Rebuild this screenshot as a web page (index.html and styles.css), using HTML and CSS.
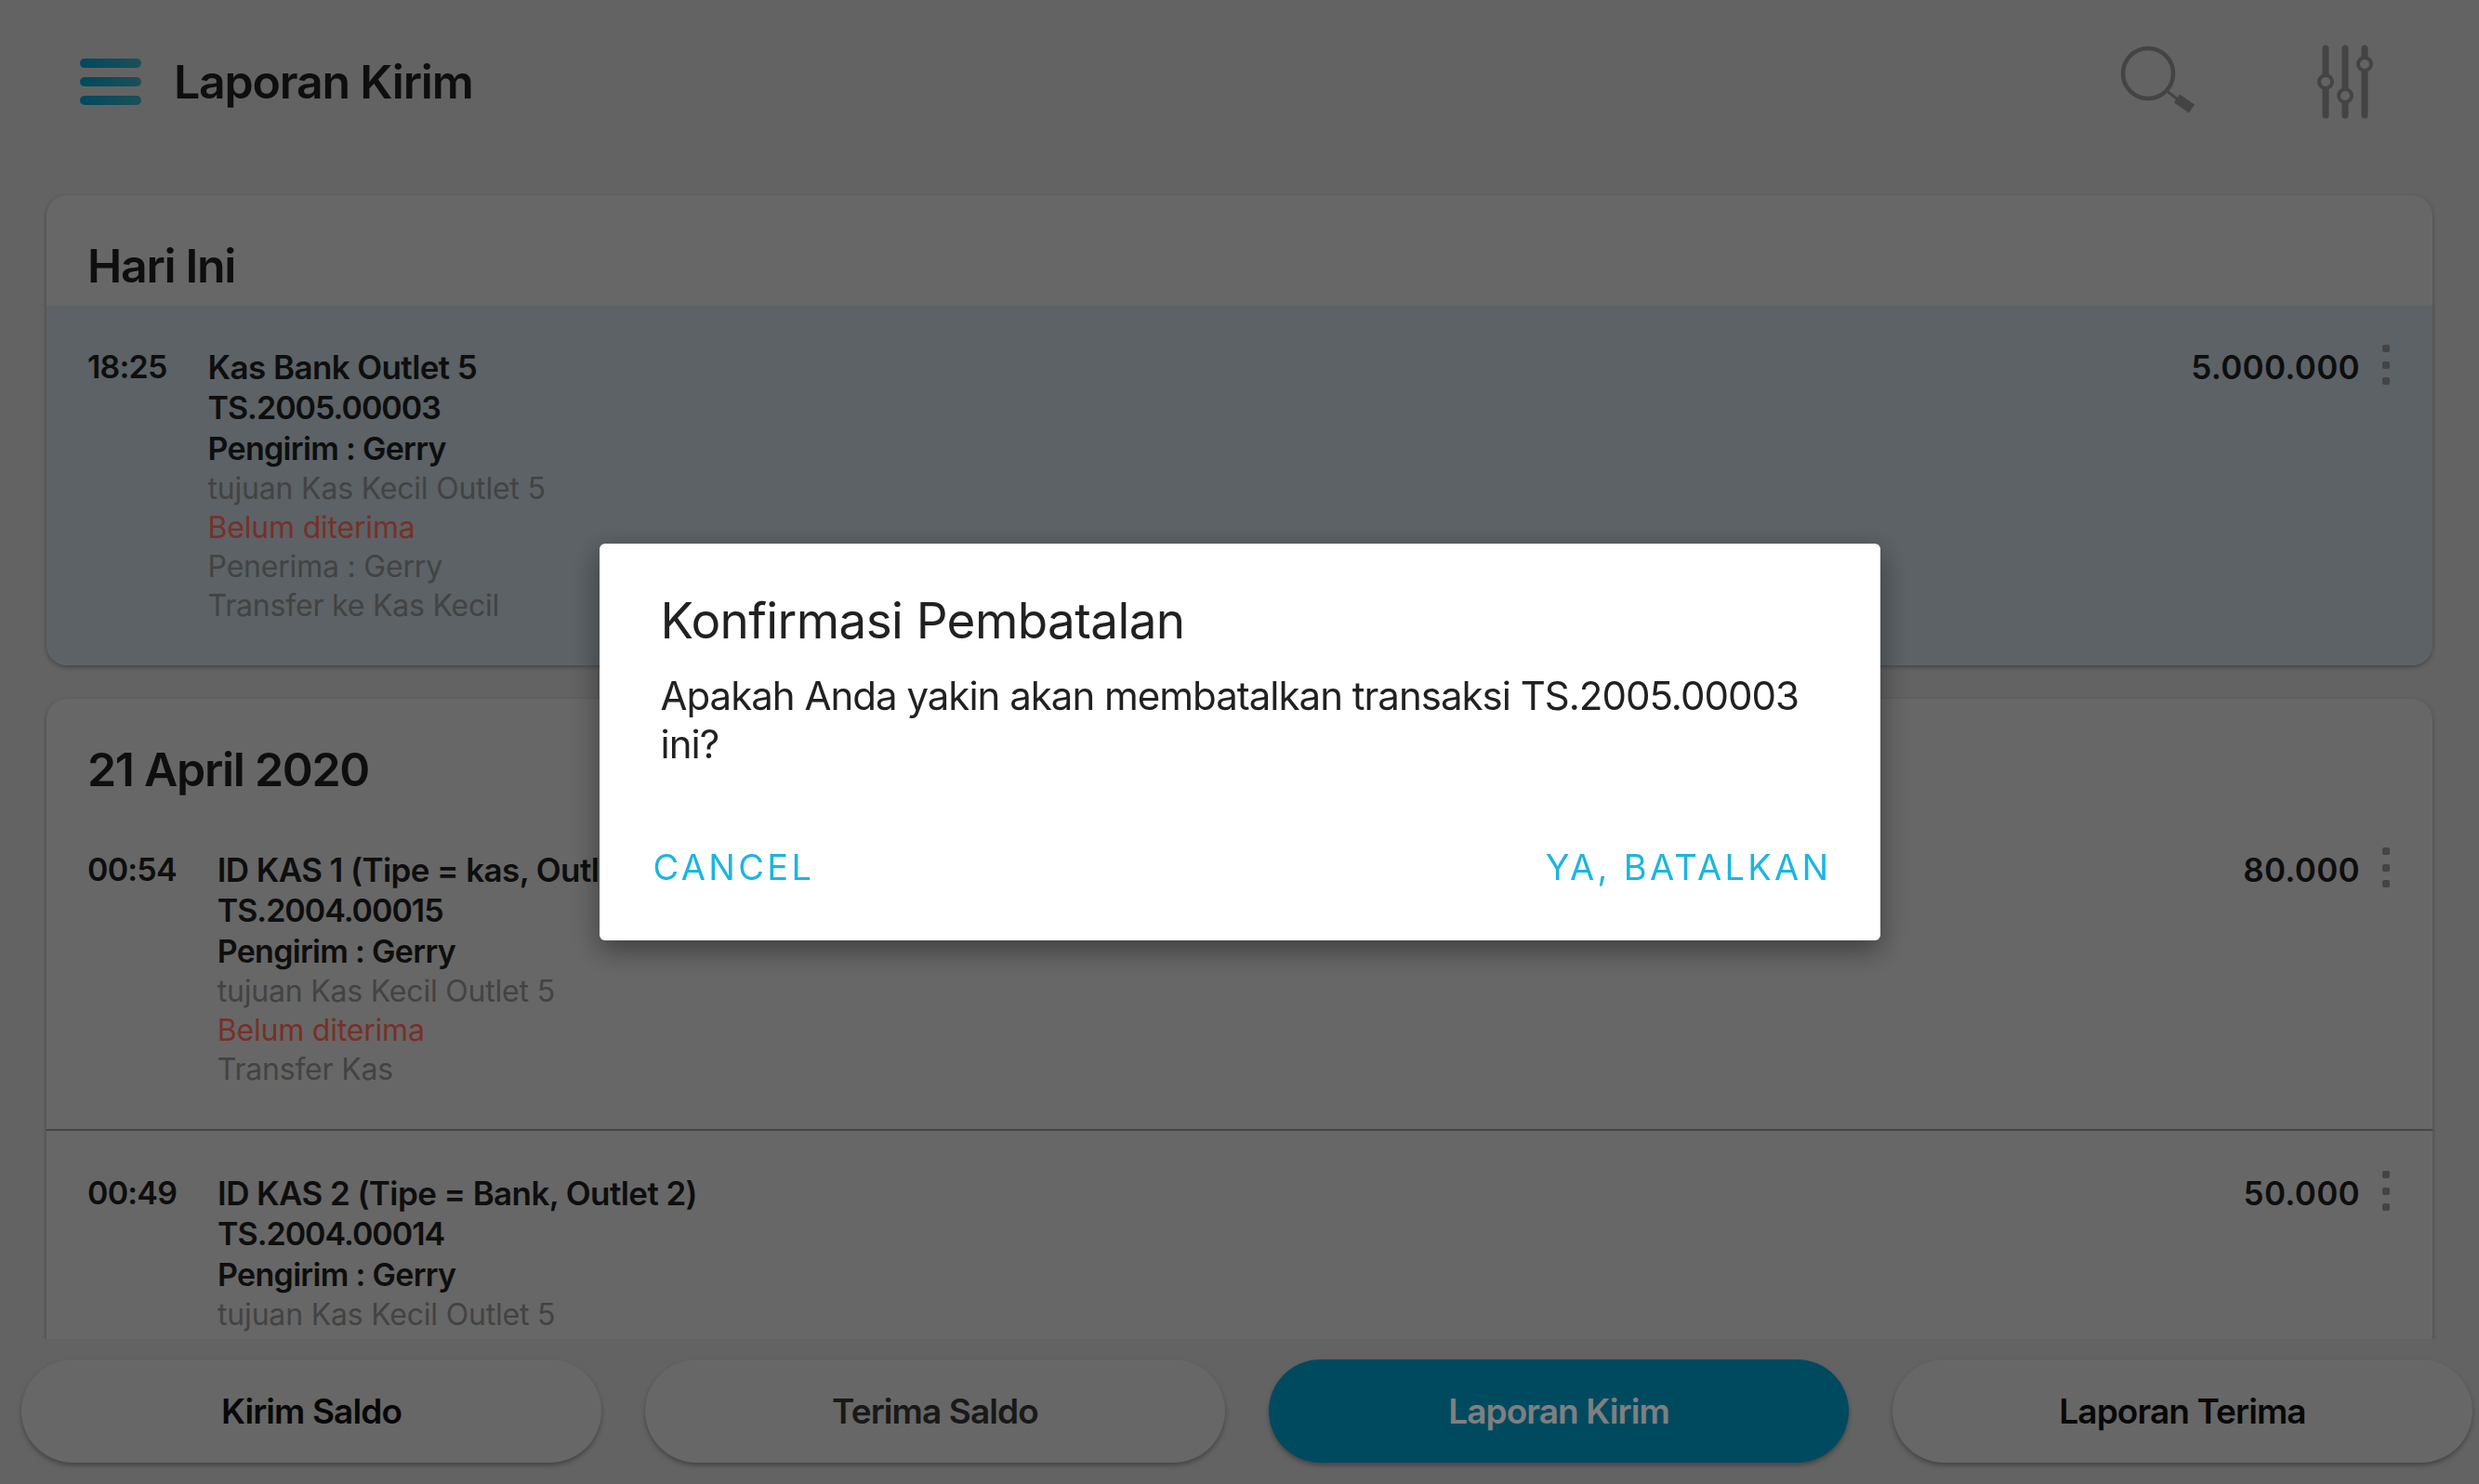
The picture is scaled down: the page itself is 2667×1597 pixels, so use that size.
FILE: index.html
```html
<!DOCTYPE html>
<html lang="id">
<head>
    <meta charset="UTF-8">
    <meta name="viewport" content="width=device-width, initial-scale=1.0">
    <title>Laporan Kirim</title>
    <link rel="stylesheet" href="styles.css">
</head>
<body>
    <div class="app">
        <header class="topbar">
            <div class="menu-icon"><span></span><span></span><span></span></div>
            <h1 class="page-title">Laporan Kirim</h1>
            <svg class="search-icon" width="70" height="90" viewBox="0 0 70 90">
                <circle cx="31" cy="35" r="27" fill="none" stroke="#888" stroke-width="4.5"/>
                <line x1="50" y1="53" x2="63" y2="63" stroke="#888" stroke-width="3"/>
                <line x1="62" y1="62" x2="78" y2="73" stroke="#888" stroke-width="11"/>
            </svg>
            <svg class="filter-icon" width="70" height="90" viewBox="0 0 70 90">
                <g stroke="#888" stroke-width="7" stroke-linecap="round">
                    <line x1="14" y1="8" x2="14" y2="80"/>
                    <line x1="35" y1="8" x2="35" y2="80"/>
                    <line x1="56" y1="8" x2="56" y2="80"/>
                </g>
                <g fill="#c6c6c6" stroke="#888" stroke-width="4">
                    <circle cx="14" cy="44" r="7"/>
                    <circle cx="35" cy="59" r="7"/>
                    <circle cx="56" cy="25" r="7"/>
                </g>
            </svg>
        </header>

        <main class="report-list">
            <section class="card">
                <h2 class="card-title">Hari Ini</h2>
                <div class="row row-active">
                    <div class="time">18:25</div>
                    <div class="detail">
                        <div class="name">Kas Bank Outlet 5</div>
                        <div class="code">TS.2005.00003</div>
                        <div class="sender">Pengirim : Gerry</div>
                        <div class="muted">tujuan Kas Kecil Outlet 5</div>
                        <div class="muted red">Belum diterima</div>
                        <div class="muted">Penerima : Gerry</div>
                        <div class="muted">Transfer ke Kas Kecil</div>
                    </div>
                    <div class="amount">5.000.000</div>
                    <div class="dots"><i></i><i></i><i></i></div>
                </div>
            </section>

            <section class="card">
                <h2 class="card-title">21 April 2020</h2>
                <div class="row">
                    <div class="time">00:54</div>
                    <div class="detail">
                        <div class="name">ID KAS 1 (Tipe = kas, Outlet 5)</div>
                        <div class="code">TS.2004.00015</div>
                        <div class="sender">Pengirim : Gerry</div>
                        <div class="muted">tujuan Kas Kecil Outlet 5</div>
                        <div class="muted red">Belum diterima</div>
                        <div class="muted">Transfer Kas</div>
                    </div>
                    <div class="amount">80.000</div>
                    <div class="dots"><i></i><i></i><i></i></div>
                </div>
                <div class="row row-line">
                    <div class="time">00:49</div>
                    <div class="detail">
                        <div class="name">ID KAS 2 (Tipe = Bank, Outlet 2)</div>
                        <div class="code">TS.2004.00014</div>
                        <div class="sender">Pengirim : Gerry</div>
                        <div class="muted">tujuan Kas Kecil Outlet 5</div>
                    </div>
                    <div class="amount">50.000</div>
                    <div class="dots"><i></i><i></i><i></i></div>
                </div>
            </section>
        </main>

        <nav class="bottom-nav">
            <div class="nav-btn">Kirim Saldo</div>
            <div class="nav-btn nav-btn-soft">Terima Saldo</div>
            <div class="nav-btn nav-btn-active">Laporan Kirim</div>
            <div class="nav-btn">Laporan Terima</div>
        </nav>
    </div>

    <div class="overlay">
        <div class="dialog">
            <h3 class="dialog-title">Konfirmasi Pembatalan</h3>
            <p class="dialog-text">Apakah Anda yakin akan membatalkan transaksi TS.2005.00003 ini?</p>
            <div class="dialog-actions">
                <span class="dialog-btn">CANCEL</span>
                <span class="dialog-btn">YA, BATALKAN</span>
            </div>
        </div>
    </div>
</body>
</html>
```

FILE: styles.css
```css
* {
    box-sizing: border-box;
}
html, body {
    margin: 0;
    height: 100%;
    overflow: hidden;
}
body {
    font-family: 'Inter', 'Roboto', sans-serif;
    color: #1c1c1c;
    background-color: #c6c6c6;
}
.app {
    height: 1597px;
    display: flex;
    flex-direction: column;
}

/* bar atas */
.topbar {
    height: 208px;
    flex: none;
    display: flex;
    align-items: center;
    padding: 0 0 32px 86px;
}
.menu-icon {
    display: flex;
    flex-direction: column;
    gap: 10px;
    width: 66px;
}
.menu-icon span {
    height: 10px;
    border-radius: 5px;
    background: linear-gradient(90deg, #0094be, #3a9fb0);
}
.page-title {
    margin: 0 0 0 35px;
    font-size: 50px;
    font-weight: 600;
    letter-spacing: -1.2px;
    flex: 1;
}
.search-icon {
    margin-right: 138px;
    margin-top: 2px;
    overflow: visible;
}
.filter-icon {
    margin-right: 109px;
    margin-top: 2px;
}

/* daftar laporan */
.report-list {
    flex: 1;
    overflow: hidden;
    padding: 2px 50px 0;
    display: flex;
    flex-direction: column;
    gap: 36px;
}
.card {
    flex: none;
    background-color: #cecece;
    border-radius: 22px;
    box-shadow: 0 2px 5px rgba(0, 0, 0, 0.3);
    overflow: hidden;
}
.card-title {
    margin: 0;
    height: 119px;
    padding: 45px 44px 0;
    font-size: 50px;
    line-height: 62px;
    font-weight: 600;
    letter-spacing: -1.3px;
}
.row {
    display: flex;
    align-items: flex-start;
    gap: 44px;
    padding: 43px 46px 43px 44px;
    font-size: 34px;
}
.row-active {
    background-color: #b8c4cc;
    padding-top: 44px;
}
.row-line {
    border-top: 2px solid #8a8a8a;
    padding-top: 45px;
}
.time {
    line-height: 44px;
    font-weight: 600;
    letter-spacing: -0.8px;
}
.detail {
    flex: 1;
}
.name, .code, .sender {
    line-height: 44px;
    font-weight: 600;
}
.name {
    font-size: 35px;
    letter-spacing: -0.6px;
}
.code {
    letter-spacing: -1px;
}
.sender {
    letter-spacing: -0.7px;
}
.muted {
    line-height: 42px;
    font-size: 32px;
    letter-spacing: -0.2px;
    color: #868686;
}
.red {
    color: #f06050;
}
.amount {
    line-height: 44px;
    font-size: 35px;
    font-weight: 600;
    letter-spacing: 0.3px;
}
.dots {
    display: flex;
    flex-direction: column;
    gap: 9.5px;
    margin: -2px 0 0 -20px;
}
.dots i {
    width: 8px;
    height: 8px;
    border-radius: 2px;
    background-color: #888;
}

/* tombol bawah */
.bottom-nav {
    flex: none;
    height: 156px;
    padding: 22px 7px 23px 23px;
    display: grid;
    grid-template-columns: repeat(4, 1fr);
    gap: 47px;
}
.nav-btn {
    display: flex;
    align-items: center;
    justify-content: center;
    border-radius: 56px;
    background-color: #cecece;
    font-size: 37px;
    font-weight: 600;
    letter-spacing: -0.9px;
    box-shadow: 0 3px 5px rgba(0, 0, 0, 0.3);
    color: #111;
}
.nav-btn-soft {
    color: #333;
}
.nav-btn-active {
    background-color: #0094be;
    color: #fff;
}

/* dialog konfirmasi */
.overlay {
    position: fixed;
    inset: 0;
    display: flex;
    align-items: center;
    justify-content: center;
    background-color: rgba(0, 0, 0, 0.5);
}
.dialog {
    width: 1378px;
    height: 427px;
    padding: 52px 52px 0 66px;
    background-color: #fff;
    border-radius: 6px;
    box-shadow: 0 10px 30px rgba(0, 0, 0, 0.4);
}
.dialog-title {
    margin: 0;
    font-size: 53px;
    line-height: 62px;
    font-weight: 400;
    letter-spacing: -0.6px;
    color: #212121;
}
.dialog-text {
    margin: 24px 0 0;
    font-size: 42px;
    line-height: 52px;
    letter-spacing: -1px;
    color: #212121;
}
.dialog-actions {
    display: flex;
    justify-content: space-between;
    margin: 83px 0 0 -8px;
}
.dialog-btn {
    font-size: 38px;
    line-height: 46px;
    letter-spacing: 3.3px;
    color: #1cb5e0;
}
```
